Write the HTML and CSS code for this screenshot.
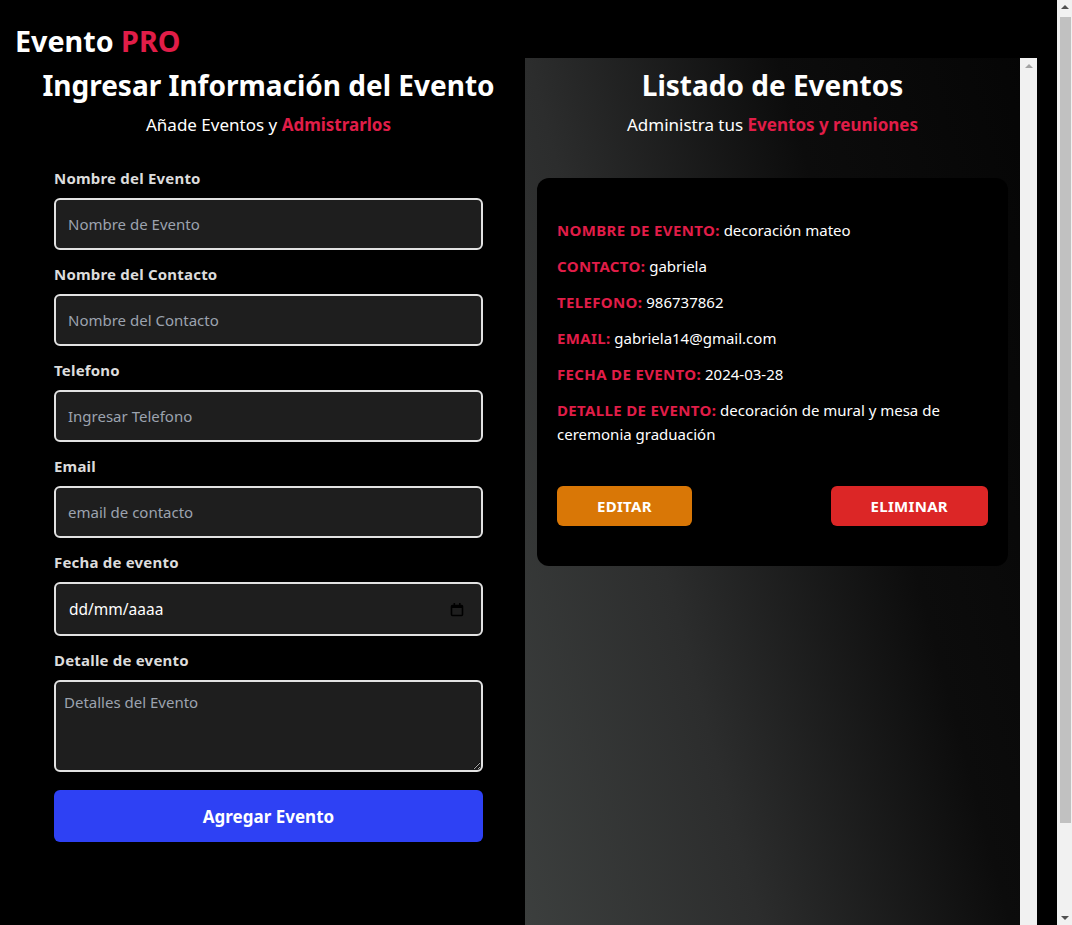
FILE: index.html
```html
<!DOCTYPE html>
<html lang="es">
<head>
<meta charset="utf-8">
<title>Evento PRO</title>
<link rel="stylesheet" href="styles.css">
</head>
<body>
<div class="page">
  <div class="page-main">
    <header class="topbar">
      <span class="brand">Evento <span class="accent">PRO</span></span>
    </header>
    <main class="layout">
      <section class="form-col">
        <h1 class="title">Ingresar Información del Evento</h1>
        <p class="subtitle">Añade Eventos y <span class="accent strong">Admistrarlos</span></p>
        <form class="event-form">
          <label class="field-label" for="nombre">Nombre del Evento</label>
          <input class="field" id="nombre" type="text" placeholder="Nombre de Evento">
          <label class="field-label" for="contacto">Nombre del Contacto</label>
          <input class="field" id="contacto" type="text" placeholder="Nombre del Contacto">
          <label class="field-label" for="telefono">Telefono</label>
          <input class="field" id="telefono" type="text" placeholder="Ingresar Telefono">
          <label class="field-label" for="email">Email</label>
          <input class="field" id="email" type="text" placeholder="email de contacto">
          <label class="field-label" for="fecha">Fecha de evento</label>
          <div class="field date-field">
            <input class="date-input" id="fecha" type="text" placeholder="dd/mm/aaaa">
            <svg class="cal-icon" width="14" height="15" viewBox="0 0 14 15" aria-hidden="true">
              <rect x="1.5" y="3.5" width="11" height="10" rx="1" fill="none" stroke="#000" stroke-width="1.6"/>
              <rect x="1.5" y="3.5" width="11" height="2.5" fill="#000"/>
              <rect x="3.5" y="1" width="1.6" height="3" fill="#000"/>
              <rect x="9" y="1" width="1.6" height="3" fill="#000"/>
            </svg>
          </div>
          <label class="field-label" for="detalle">Detalle de evento</label>
          <textarea class="field textarea" id="detalle" placeholder="Detalles del Evento"></textarea>
          <button class="submit" type="button">Agregar Evento</button>
        </form>
      </section>
      <section class="list-panel">
        <div class="list-content">
          <h2 class="title">Listado de Eventos</h2>
          <p class="subtitle">Administra tus <span class="accent strong">Eventos y reuniones</span></p>
          <article class="card">
            <p class="info"><span class="key">NOMBRE DE EVENTO:</span> decoración mateo</p>
            <p class="info"><span class="key">CONTACTO:</span> gabriela</p>
            <p class="info"><span class="key">TELEFONO:</span> 986737862</p>
            <p class="info"><span class="key">EMAIL:</span> gabriela14@gmail.com</p>
            <p class="info"><span class="key">FECHA DE EVENTO:</span> 2024-03-28</p>
            <p class="info"><span class="key">DETALLE DE EVENTO:</span> decoración de mural y mesa de ceremonia graduación</p>
            <div class="actions">
              <button class="btn btn-edit" type="button">EDITAR</button>
              <button class="btn btn-delete" type="button">ELIMINAR</button>
            </div>
          </article>
        </div>
        <div class="fake-scroll"><span class="arrow-up"></span></div>
      </section>
    </main>
  </div>
  <div class="page-rail">
    <span class="rail-arrow-up"></span>
    <span class="rail-thumb"></span>
    <span class="rail-arrow-down"></span>
  </div>
</div>
</body>
</html>
```

FILE: styles.css
```css
* { box-sizing: border-box; }

body {
  margin: 0;
  background: #000;
  color: #fff;
  font-family: "Noto Sans", "Open Sans", sans-serif;
}

.page {
  display: flex;
  align-items: flex-start;
}

.page-main {
  width: 1057px;
  flex: none;
}

.page-rail {
  width: 15px;
  height: 925px;
  flex: none;
  background: #f1f1f1;
  display: flex;
  flex-direction: column;
  align-items: center;
}

.rail-arrow-up {
  width: 0;
  height: 0;
  margin-top: 5px;
  border-left: 4px solid transparent;
  border-right: 4px solid transparent;
  border-bottom: 4px solid #505050;
}

.rail-thumb {
  width: 11px;
  height: 806px;
  margin-top: 8px;
  background: #c1c1c1;
  align-self: flex-end;
  margin-right: 1px;
}

.rail-arrow-down {
  width: 0;
  height: 0;
  margin-top: 93px;
  border-left: 4px solid transparent;
  border-right: 4px solid transparent;
  border-top: 4px solid #505050;
}

.topbar {
  padding: 23px 15px 0;
  height: 58px;
}

.brand {
  font-size: 28.7px;
  font-weight: 700;
  line-height: 36px;
}

.accent { color: #e11d48; }
.strong { font-weight: 700; }

.layout {
  display: flex;
  align-items: flex-start;
  padding-left: 15px;
}

.form-col {
  width: 507px;
  flex: none;
}

.title {
  margin: 9px 0 0;
  font-size: 28px;
  line-height: 36px;
  font-weight: 700;
  text-align: center;
}

.subtitle {
  margin: 8px 0 0;
  font-size: 17px;
  line-height: 28px;
  text-align: center;
}

.event-form {
  width: 429px;
  margin: 29px auto 0;
  display: flex;
  flex-direction: column;
}

.field-label {
  font-size: 15px;
  line-height: 20px;
  font-weight: 700;
  letter-spacing: 0.2px;
  color: #dcdcdc;
  margin-bottom: 10px;
}

.field {
  height: 52px;
  border: 2px solid #e2e2e2;
  border-radius: 6px;
  background: #1e1e1e;
  color: #fff;
  padding: 0 12px;
  font-family: inherit;
  font-size: 15px;
  margin-bottom: 14px;
  outline: none;
}

.field::placeholder { color: #9ca3af; }

.date-field {
  height: 54px;
  display: flex;
  align-items: center;
  justify-content: space-between;
  padding: 0 17px 0 13px;
}

.date-input {
  background: transparent;
  border: none;
  outline: none;
  color: #fff;
  font-family: inherit;
  font-size: 15.5px;
  padding: 0;
  width: 200px;
}

.date-input::placeholder { color: #fff; }

.cal-icon { display: block; }

.textarea {
  height: 92px;
  padding: 10px 8px;
  line-height: 20px;
  resize: vertical;
  margin-bottom: 18px;
}

.submit {
  height: 52px;
  border: none;
  border-radius: 6px;
  background: #2e41f4;
  color: #fff;
  font-family: inherit;
  font-size: 17px;
  font-weight: 700;
  cursor: pointer;
}

.list-panel {
  margin-left: 3px;
  width: 512px;
  height: 925px;
  flex: none;
  display: flex;
  background: linear-gradient(75deg, #3d403f 0%, #2c2d2d 33%, #0c0c0c 66%, #050505 100%);
}

.list-content {
  width: 495px;
  flex: none;
}

.card {
  margin: 39px 12px 0;
  background: #000;
  border-radius: 12px;
  padding: 40px 20px;
}

.info {
  margin: 0 0 12px;
  font-size: 15px;
  line-height: 24px;
}

.key {
  color: #e11d48;
  font-weight: 700;
  letter-spacing: 0.35px;
}

.actions {
  display: flex;
  justify-content: space-between;
  margin-top: 40px;
}

.btn {
  height: 40px;
  padding: 0 40px;
  border: none;
  border-radius: 6px;
  color: #fff;
  font-family: inherit;
  font-size: 15px;
  font-weight: 700;
  letter-spacing: 0.3px;
  cursor: pointer;
}

.btn-edit { background: #d97706; }
.btn-delete { background: #dc2626; }

.fake-scroll {
  width: 17px;
  flex: none;
  background: #f1f1f1;
  display: flex;
  justify-content: center;
}

.arrow-up {
  width: 0;
  height: 0;
  margin-top: 6px;
  border-left: 4px solid transparent;
  border-right: 4px solid transparent;
  border-bottom: 4px solid #a3a3a3;
}
```
